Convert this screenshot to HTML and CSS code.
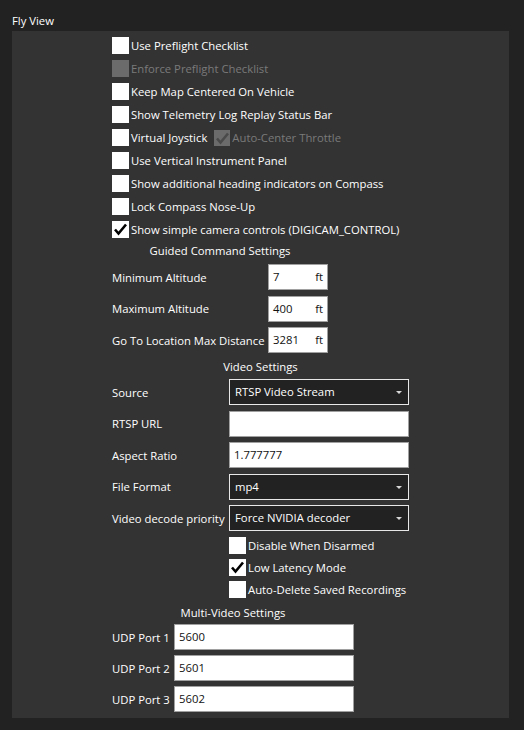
FILE: index.html
```html
<!DOCTYPE html>
<html>
<head>
<meta charset="utf-8">
<link rel="stylesheet" href="styles.css">
</head>
<body>
<div class="title">Fly View</div>
<div class="panel">
  <div class="column">
    <div class="checklist">
      <div class="cb-row"><span class="box"></span><span>Use Preflight Checklist</span></div>
      <div class="cb-row disabled"><span class="box"></span><span>Enforce Preflight Checklist</span></div>
      <div class="cb-row"><span class="box"></span><span>Keep Map Centered On Vehicle</span></div>
      <div class="cb-row"><span class="box"></span><span>Show Telemetry Log Replay Status Bar</span></div>
      <div class="cb-row"><span class="box"></span><span>Virtual Joystick</span>
        <span class="cb-sub disabled"><span class="box"><svg viewBox="0 0 17 17"><path d="M3 8.5 L6.5 12.5 L14 3.5"/></svg></span><span>Auto-Center Throttle</span></span>
      </div>
      <div class="cb-row"><span class="box"></span><span>Use Vertical Instrument Panel</span></div>
      <div class="cb-row"><span class="box"></span><span>Show additional heading indicators on Compass</span></div>
      <div class="cb-row"><span class="box"></span><span>Lock Compass Nose-Up</span></div>
      <div class="cb-row"><span class="box"><svg viewBox="0 0 17 17"><path d="M3 8.5 L6.5 12.5 L14 3.5"/></svg></span><span>Show simple camera controls (DIGICAM_CONTROL)</span></div>
    </div>

    <div class="section guided">
      <div class="header">Guided Command Settings</div>
      <div class="grid grid-guided">
        <div class="label">Minimum Altitude</div>
        <div class="field small"><span>7</span><span>ft</span></div>
        <div class="label">Maximum Altitude</div>
        <div class="field small"><span>400</span><span>ft</span></div>
        <div class="label">Go To Location Max Distance</div>
        <div class="field small"><span>3281</span><span>ft</span></div>
      </div>
    </div>

    <div class="section video">
      <div class="header">Video Settings</div>
      <div class="grid grid-video">
        <div class="label">Source</div>
        <div class="combo"><span>RTSP Video Stream</span><span class="arrow"></span></div>
        <div class="label">RTSP URL</div>
        <div class="field"></div>
        <div class="label">Aspect Ratio</div>
        <div class="field"><span>1.777777</span></div>
        <div class="label">File Format</div>
        <div class="combo"><span>mp4</span><span class="arrow"></span></div>
        <div class="label">Video decode priority</div>
        <div class="combo"><span>Force NVIDIA decoder</span><span class="arrow"></span></div>
      </div>
      <div class="video-checks">
        <div class="cb-row"><span class="box"></span><span>Disable When Disarmed</span></div>
        <div class="cb-row"><span class="box"><svg viewBox="0 0 17 17"><path d="M3 8.5 L6.5 12.5 L14 3.5"/></svg></span><span>Low Latency Mode</span></div>
        <div class="cb-row"><span class="box"></span><span>Auto-Delete Saved Recordings</span></div>
      </div>
    </div>

    <div class="section multi">
      <div class="header">Multi-Video Settings</div>
      <div class="grid grid-multi">
        <div class="label">UDP Port 1</div>
        <div class="field"><span>5600</span></div>
        <div class="label">UDP Port 2</div>
        <div class="field"><span>5601</span></div>
        <div class="label">UDP Port 3</div>
        <div class="field"><span>5602</span></div>
      </div>
    </div>
  </div>
</div>
</body>
</html>
```

FILE: styles.css
```css
html, body {
  margin: 0;
  padding: 0;
  background: #222222;
}
body {
  width: 524px;
  height: 730px;
  font-family: "Open Sans", "Liberation Sans", sans-serif;
  font-size: 11.3px;
  color: #ffffff;
  overflow: hidden;
}
.title {
  padding: 13px 0 0 12px;
  height: 18px;
  line-height: 16px;
}
.panel {
  margin-left: 12px;
  width: 497px;
  background: #333333;
  padding: 6px 0 6px 0;
  display: flex;
  justify-content: center;
}
.column {
  width: 297px;
  display: flex;
  flex-direction: column;
  align-items: flex-start;
}
.checklist {
  display: flex;
  flex-direction: column;
  gap: 6px;
}
.cb-row {
  display: flex;
  align-items: center;
  height: 17px;
  line-height: 17px;
  white-space: nowrap;
}
.box {
  width: 17px;
  height: 17px;
  background: #ffffff;
  margin-right: 2px;
  flex: none;
  display: block;
}
.box svg {
  display: block;
  width: 17px;
  height: 17px;
}
.box svg path {
  fill: none;
  stroke: #000000;
  stroke-width: 2.6;
  stroke-linejoin: miter;
  stroke-linecap: butt;
}
.disabled {
  color: #7a7a7a;
}
.disabled .box {
  background: #6b6b6b;
}
.disabled .box svg path {
  stroke: #4a4a4a;
}
.cb-sub {
  display: flex;
  align-items: center;
  margin-left: 7px;
}
.cb-sub .box {
  width: 16px;
  height: 16px;
}
.section {
  display: flex;
  flex-direction: column;
  align-items: stretch;
}
.header {
  text-align: center;
  line-height: 16px;
  height: 16px;
}
.grid {
  display: grid;
  align-items: center;
}
.label {
  white-space: nowrap;
}
.guided {
  margin-top: 5px;
}
.guided .grid {
  margin-top: 5px;
  grid-template-columns: 156px 60px;
  row-gap: 5.5px;
}
.video {
  margin-top: 6px;
}
.video .grid {
  margin-top: 4px;
  grid-template-columns: 117px 180px;
  row-gap: 5.5px;
}
.multi {
  margin-top: 7px;
}
.multi .grid {
  margin-top: 3px;
  grid-template-columns: 62px 180px;
  row-gap: 5px;
}
.field {
  box-sizing: border-box;
  height: 26px;
  background: #ffffff;
  border: 1px solid #a0a0a0;
  color: #111111;
  display: flex;
  align-items: center;
  justify-content: space-between;
  padding: 0 4px 0 4px;
  line-height: 24px;
}
.field.small {
  padding: 0 4px 0 4px;
}
.combo {
  box-sizing: border-box;
  height: 26px;
  background: #222222;
  border: 1px solid #e8e8e8;
  color: #ffffff;
  display: flex;
  align-items: center;
  justify-content: space-between;
  padding: 0 6px 0 5px;
  line-height: 24px;
}
.arrow {
  width: 0;
  height: 0;
  border-left: 3.5px solid transparent;
  border-right: 3.5px solid transparent;
  border-top: 3.5px solid #d8d8d8;
  margin-top: 1px;
}
.video-checks {
  margin-top: 6px;
  margin-left: 117px;
  display: flex;
  flex-direction: column;
  gap: 5px;
}
```
